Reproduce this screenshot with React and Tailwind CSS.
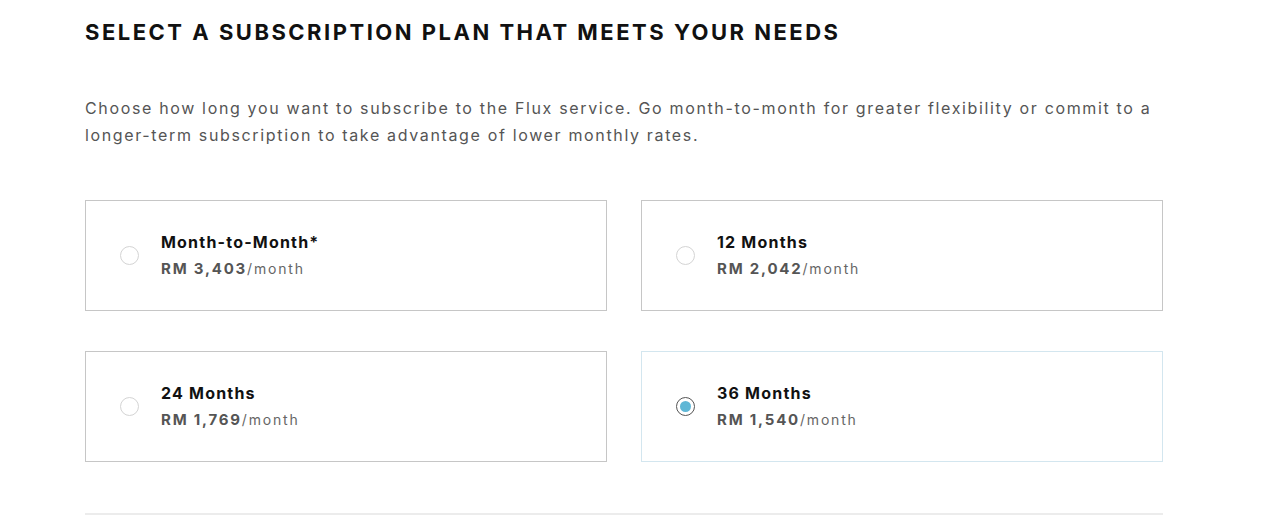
import { useState } from 'react';

const plans = [
  { id: 'm2m', label: 'Month-to-Month*', price: 'RM 3,403' },
  { id: '12', label: '12 Months', price: 'RM 2,042' },
  { id: '24', label: '24 Months', price: 'RM 1,769' },
  { id: '36', label: '36 Months', price: 'RM 1,540' },
];

export default function App() {
  const [selected, setSelected] = useState('36');

  return (
    <div className="min-h-screen bg-white" style={{ fontFamily: 'Inter, "Liberation Sans", sans-serif' }}>
      <div className="w-[1078px] ml-[85px] pt-[18px]">
        <h1 className="text-[22px] leading-[28px] font-bold tracking-[2.5px] text-[#111]">
          SELECT A SUBSCRIPTION PLAN THAT MEETS YOUR NEEDS
        </h1>

        <p className="mt-[49px] text-[16px] leading-[27px] tracking-[1.65px] text-[#555] w-[1078px]">
          Choose how long you want to subscribe to the Flux service. Go month-to-month for greater flexibility or commit to a longer-term subscription to take advantage of lower monthly rates.
        </p>

        <div className="mt-[51px] grid grid-cols-2 gap-x-[34px] gap-y-[40px]">
          {plans.map(p => {
            const active = selected === p.id;
            return (
              <button
                key={p.id}
                onClick={() => setSelected(p.id)}
                className={`h-[111px] flex items-center text-left border ${active ? 'border-[#d3e6ef]' : 'border-[#c6c6c6]'}`}
              >
                <span className="ml-[34px] w-[19px] h-[19px] rounded-full flex items-center justify-center flex-shrink-0 border-[1.5px] border-[#555] bg-white"
                  style={active ? {} : { borderColor: '#d4d4d4', borderWidth: 1 }}>
                  {active && <span className="w-[11px] h-[11px] rounded-full bg-[#5fb7d6]" />}
                </span>
                <span className="ml-[22px] flex flex-col">
                  <span className="text-[16px] leading-[27px] font-bold tracking-[1.2px] text-[#111]">{p.label}</span>
                  <span className="text-[15px] leading-[26px] tracking-[1.8px] text-[#555]">
                    <span className="font-bold">{p.price}</span>
                    <span className="text-[14px] text-[#666]">/month</span>
                  </span>
                </span>
              </button>
            );
          })}
        </div>

        <div className="mt-[51px] h-[2px] bg-[#ececec]" />
      </div>
    </div>
  );
}
